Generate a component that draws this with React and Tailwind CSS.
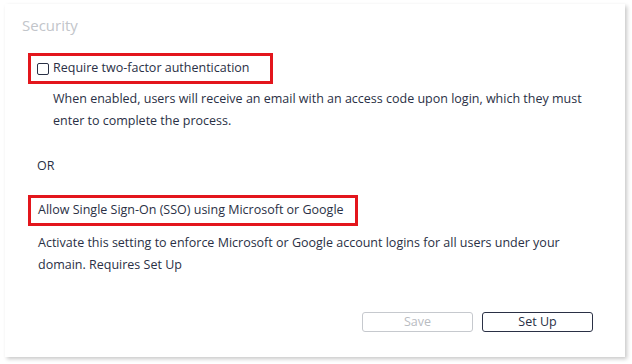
export default function App() {
  return (
    <div className="w-[632px] h-[364px] bg-white pt-[4px] pl-[5px] font-['Open_Sans',sans-serif] text-[#2a3045]">
      <div className="w-[620px] h-[353px] bg-white shadow-[2px_2px_4px_rgba(0,0,0,0.22)] flex flex-col">
        <h2 className="pl-[17px] pt-[11px] text-[15px] leading-[20px] text-[#c2c5ca]">Security</h2>

        <div className="pl-[23px] pt-[18px]">
          <div className="w-[245px] h-[31px] border-[3px] border-[#e3161c] flex items-center pl-[6px] gap-[4px]">
            <span className="w-[12px] h-[12px] border border-[#2a3045] rounded-[2px]" />
            <span className="text-[12.5px]">Require two-factor authentication</span>
          </div>
        </div>

        <p className="pl-[48px] pt-[4px] pr-[30px] text-[12.5px] leading-[22px]">
          When enabled, users will receive an email with an access code upon login, which they must enter to complete the process.
        </p>

        <p className="pl-[32px] pt-[23px] text-[12.5px] leading-[22px]">OR</p>

        <div className="pl-[23px] pt-[18px]">
          <div className="w-[330px] h-[31px] border-[3px] border-[#e3161c] flex items-center pl-[7px]">
            <span className="text-[12.5px] whitespace-nowrap">Allow Single Sign-On (SSO) using Microsoft or Google</span>
          </div>
        </div>

        <p className="pl-[33px] pt-[6px] pr-[30px] text-[12.5px] leading-[22px]">
          Activate this setting to enforce Microsoft or Google account logins for all users under your domain. Requires Set Up
        </p>

        <div className="flex justify-end gap-[9px] pr-[32px] pt-[36px]">
          <button className="w-[111px] h-[20px] border border-[#c6c9ce] rounded-[3px] text-[12.5px] leading-[18px] text-[#b9bcc2]">Save</button>
          <button className="w-[111px] h-[20px] border border-[#2a3045] rounded-[3px] text-[12.5px] leading-[18px] text-[#2a3045]">Set Up</button>
        </div>
      </div>
    </div>
  );
}
